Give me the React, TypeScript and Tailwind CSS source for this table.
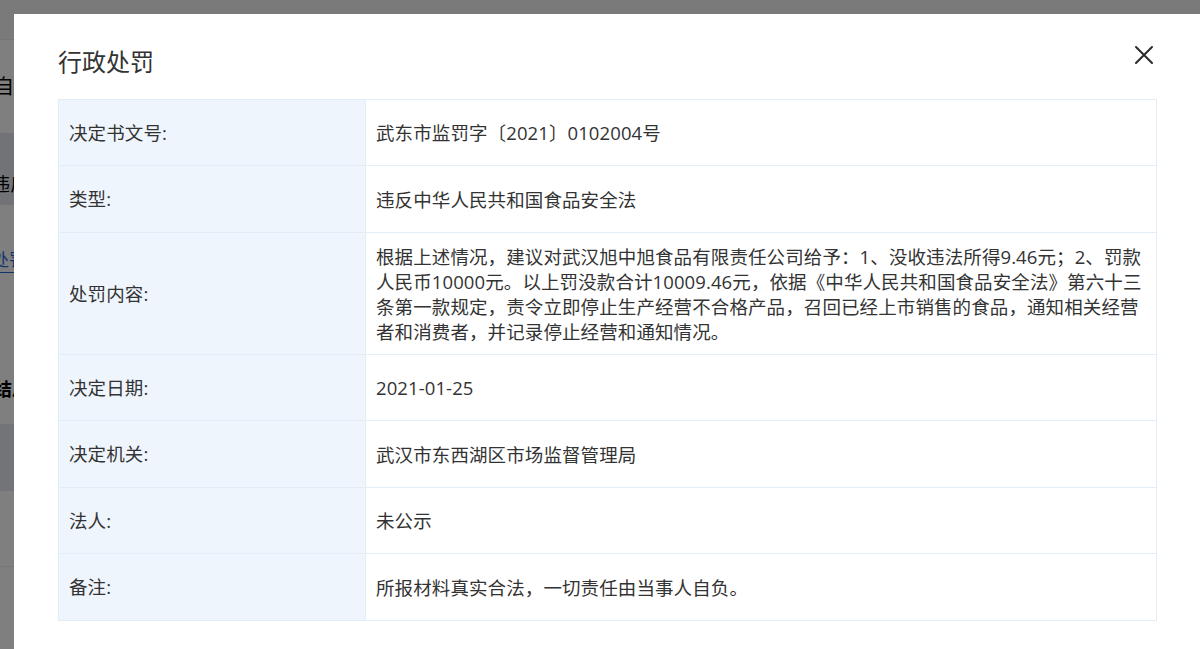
import React from "react";

const rows: { label: string; value: React.ReactNode; h: string }[] = [
  { label: "决定书文号:", value: "武东市监罚字〔2021〕0102004号", h: "h-[65px]" },
  { label: "类型:", value: "违反中华人民共和国食品安全法", h: "h-[67px]" },
  {
    label: "处罚内容:",
    h: "h-[122px]",
    value: (
      <>
        根据上述情况，建议对武汉旭中旭食品有限责任公司给予：1、没收违法所得9.46元；2、罚款
        <br />
        人民币10000元。以上罚没款合计10009.46元，依据《中华人民共和国食品安全法》第六十三
        <br />
        条第一款规定，责令立即停止生产经营不合格产品，召回已经上市销售的食品，通知相关经营
        <br />
        者和消费者，并记录停止经营和通知情况。
      </>
    ),
  },
  { label: "决定日期:", value: "2021-01-25", h: "h-[66px]" },
  { label: "决定机关:", value: "武汉市东西湖区市场监督管理局", h: "h-[67px]" },
  { label: "法人:", value: "未公示", h: "h-[66px]" },
  { label: "备注:", value: "所报材料真实合法，一切责任由当事人自负。", h: "h-[67px]" },
];

export default function App() {
  return (
    <div
      className="relative h-[649px] w-[1200px] overflow-hidden bg-white text-[#333]"
      style={{ fontFamily: '"Open Sans", "Noto Sans CJK SC", sans-serif' }}
    >
      {/* background page */}
      <div className="flex flex-col">
        <div className="h-[40px] bg-[#f4f4f4] border-b border-[#e8e8e8]" />
        <div className="h-[93px] flex items-center">
          <span className="ml-[-6px] text-[20px] leading-none text-black">自</span>
        </div>
        <div className="h-[72px] bg-[#e2e6ec] flex items-end pb-[12px]">
          <span className="ml-[-8px] text-[18px] leading-none text-black">违反</span>
        </div>
        <div className="h-[80px] flex items-end pb-[12px]">
          <span className="ml-[-8px] text-[17px] leading-none text-[#1e6fd9] border-b border-[#1e6fd9] pb-[4px]">
            处罚
          </span>
        </div>
        <div className="h-[139px] flex items-end pb-[26px]">
          <span className="ml-[-6px] text-[18px] font-bold leading-none text-black">结局</span>
        </div>
        <div className="h-[67px] bg-[#e4e8ee]" />
        <div className="h-[76px] border-b border-[#ececec]" />
      </div>

      {/* overlay */}
      <div className="absolute inset-0 bg-black/50" />

      {/* modal */}
      <div className="absolute left-[14px] top-[14px] h-[700px] w-[1187px] bg-white px-[44px] pt-[31px]">
        <div className="flex items-start justify-between">
          <h2 className="text-[24px] leading-[34px] text-[#333]">行政处罚</h2>
          <button className="mr-[3px] mt-[0px] h-[20px] w-[20px] flex items-center justify-center">
            <svg width="20" height="20" viewBox="0 0 20 20" fill="none">
              <path d="M2 2L18 18M18 2L2 18" stroke="#2b2b2b" strokeWidth="2" strokeLinecap="round" />
            </svg>
          </button>
        </div>

        <div className="mt-[20px] border border-[#e3edf8]">
          {rows.map((r, i) => (
            <div
              key={i}
              className={`flex ${i > 0 ? "border-t border-[#e3edf8]" : ""} ${r.h}`}
            >
              <div className="flex w-[307px] shrink-0 items-center bg-[#eff5fc] pl-[10px] text-[18.5px] tracking-[0.1px] text-[#333] border-r border-[#e3edf8]">
                {r.label}
              </div>
              <div className="flex flex-1 items-center px-[10px] py-[10px] text-[18.5px] leading-[25px] tracking-[0.1px] text-[#333]">
                <div>{r.value}</div>
              </div>
            </div>
          ))}
        </div>
      </div>
    </div>
  );
}
